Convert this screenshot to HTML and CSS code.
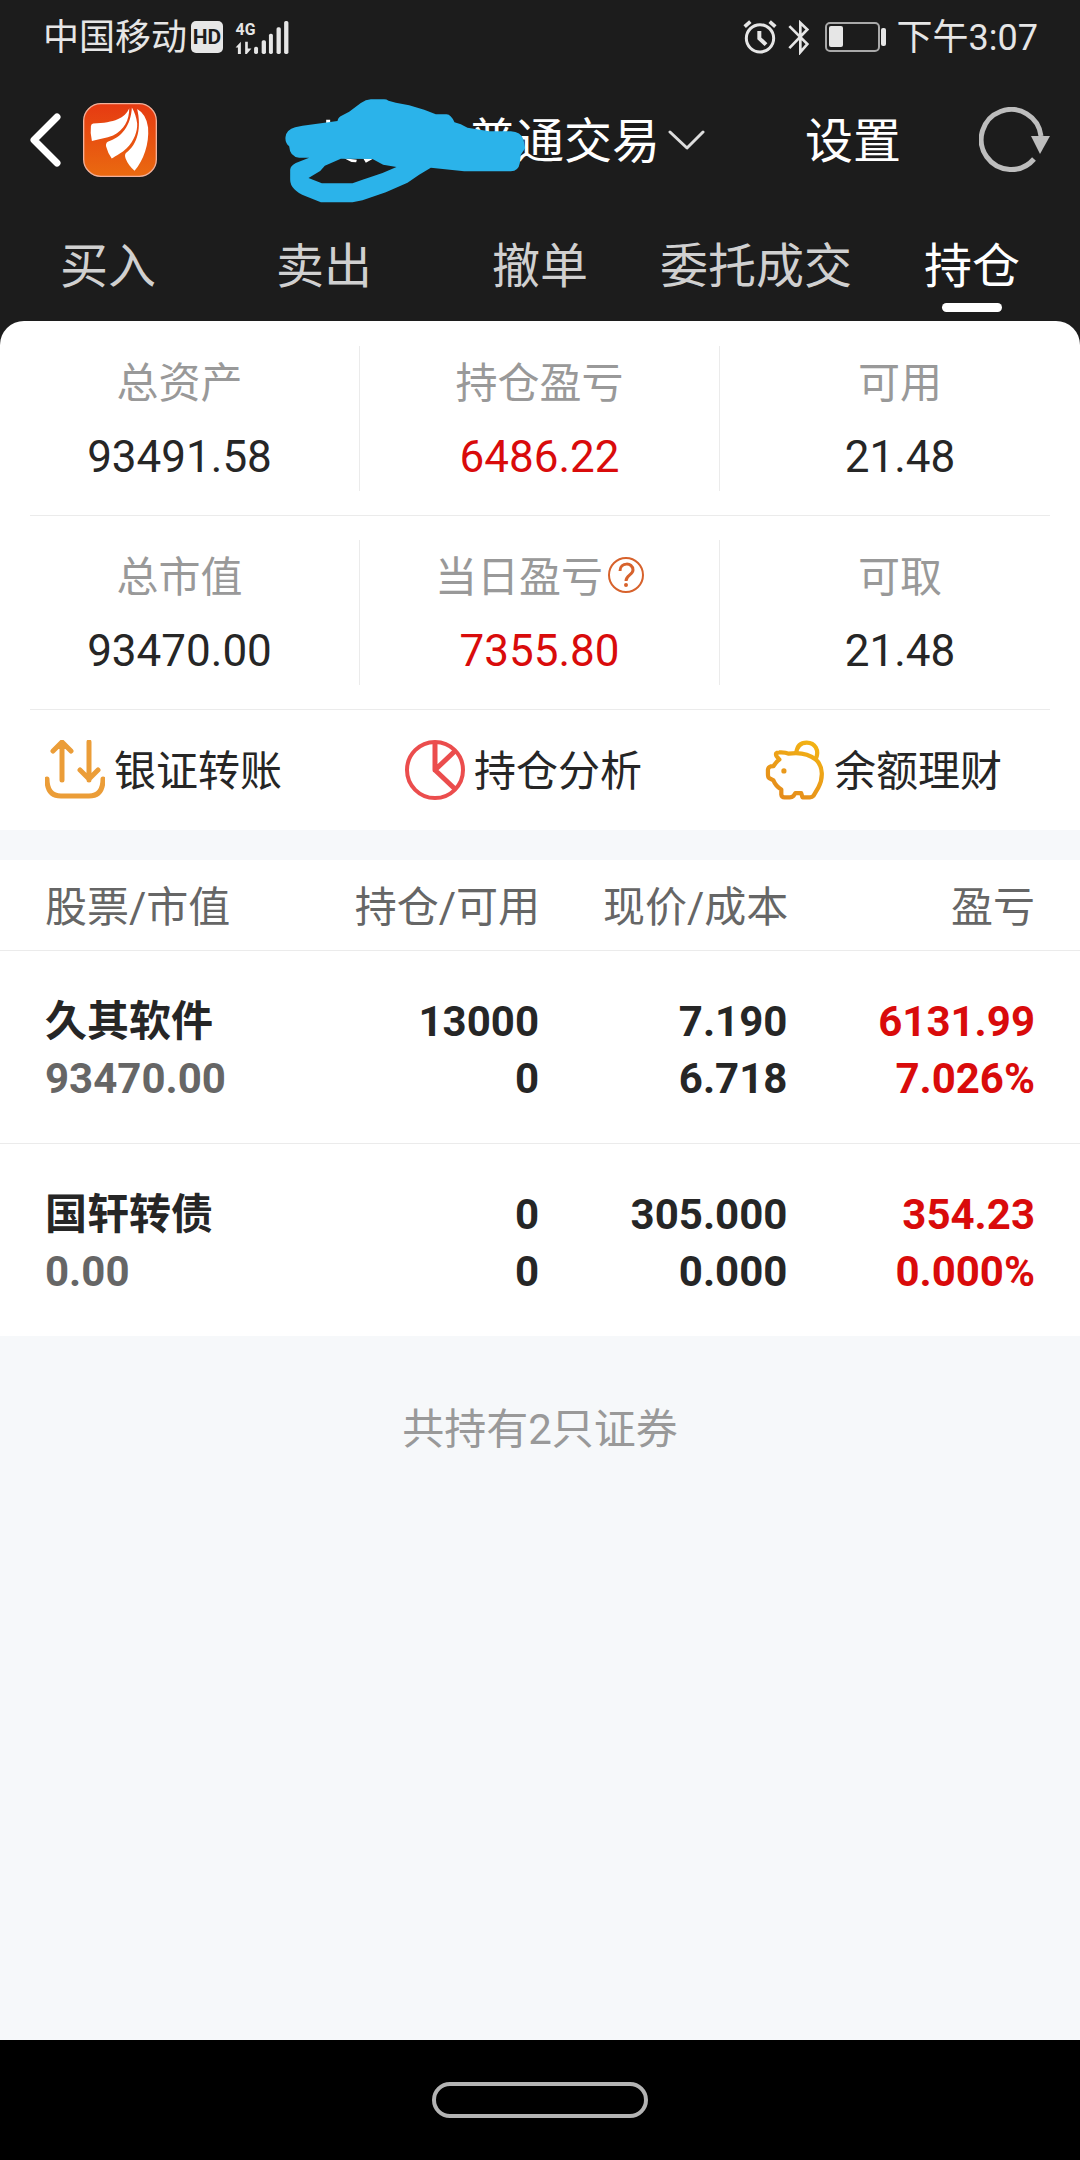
FILE: index.html
```html
<!DOCTYPE html>
<html lang="zh-CN">
<head>
    <meta charset="UTF-8">
    <meta name="viewport" content="width=device-width, initial-scale=1.0">
    <title>持仓 - 普通交易</title>
    <link rel="stylesheet" href="styles.css">
</head>
<body>
    <div class="screen">
        <div class="top">
            <div class="status-bar">
                <span class="carrier">中国移动</span>
                <span class="hd-badge">HD</span>
                <svg class="signal" viewBox="700 54 168 106">
                    <text x="704" y="99">4G</text>
                    <path d="M720 157h-9v-20h-7l16-17zM733 120h8v20h11l-14 17h-5z"/>
                    <rect x="760" y="135" width="12" height="22" rx="5"/>
                    <rect x="783" y="115" width="13" height="42" rx="5"/>
                    <rect x="805" y="96" width="12" height="61" rx="5"/>
                    <rect x="828" y="76" width="13" height="81" rx="5"/>
                    <rect x="851" y="57" width="13" height="100" rx="5"/>
                </svg>
                <svg class="alarm" viewBox="0 0 102 102" fill="none" stroke="currentColor" stroke-width="9">
                    <circle cx="51" cy="55" r="41"/>
                    <path d="M49 33v22l20 19" stroke-width="12"/>
                    <path d="M5 20L22 5M97 20L80 5" stroke-width="11"/>
                </svg>
                <svg class="bluetooth" viewBox="0 0 66 104" fill="none" stroke="currentColor" stroke-width="8">
                    <path d="M4 18l54 54-21 24V8l21 20L4 84"/>
                </svg>
                <svg class="battery" viewBox="0 0 62 30">
                    <rect x="1" y="1" width="53" height="28" rx="4" fill="none" stroke="#a9a9a9" stroke-width="2"/>
                    <rect x="4" y="4" width="14" height="21" rx="2" fill="currentColor"/>
                    <rect x="56" y="6" width="5" height="18" rx="2" fill="currentColor"/>
                </svg>
                <span class="clock">下午3:07</span>
            </div>

            <header class="title-bar">
                <button class="icon-btn" type="button" aria-label="返回">
                    <svg class="back" viewBox="0 0 31 54" fill="none" stroke="#fff" stroke-width="7" stroke-linecap="round" stroke-linejoin="round"><path d="M27 4L4 27l23 23"/></svg>
                </button>
                <svg class="logo" viewBox="249 306 224 224">
                    <defs>
                        <linearGradient id="logoBg" x1="0" y1="0" x2="0" y2="1">
                            <stop offset="0" stop-color="#e63a12"/>
                            <stop offset="1" stop-color="#ea6a10"/>
                        </linearGradient>
                    </defs>
                    <rect x="251" y="308" width="220" height="220" rx="52" fill="url(#logoBg)" stroke="#f2b09a" stroke-width="4"/>
                    <g fill="#fff">
                        <path d="M389 322C376 352 345 366 280 368Q274 369 273 376Q270 398 276 421C296 414 320 413 340 404C374 388 389 358 389 322z"/>
                        <path d="M397 320C394 375 365 412 324 423Q317 427 319 438Q324 458 336 474C350 464 366 458 382 442C404 420 414 392 413 368Q409 340 397 320z"/>
                        <path d="M413 324C426 380 416 430 379 457Q374 462 378 474Q386 495 405 511C432 480 450 430 446 380Q441 340 413 324z"/>
                    </g>
                </svg>
                <button class="account" type="button">
                    <span>普通交易</span>
                    <svg class="chevron" viewBox="0 0 37 21" fill="none" stroke="#ddd" stroke-width="3" stroke-linecap="round" stroke-linejoin="round"><path d="M2 2l17 16L35 2"/></svg>
                    <svg class="scribble" viewBox="78 58 722 312">
                        <path fill="#fff" d="M201 120h12v14h-12zM255 236l38 4-2 8-14-1zM312 236l28 2-20 11z"/>
                        <path fill="#2bb3ea" fill-rule="evenodd" d="M79 172Q82 150 108 143L130 138 235 124Q237 112 250 107L270 96 305 70Q320 59 335 59H375Q382 59 388 63L410 69 450 77 495 90 530 104H562Q576 105 586 128L605 134 625 144 690 155H755Q785 156 793 180L798 206 785 225 782 250Q778 274 755 275H615L515 264 480 285 445 309 380 338 310 362 280 368H185L140 350Q93 330 93 300V270Q94 258 110 250L150 234H120Q92 232 90 200Q77 188 79 172zM148 295L188 311H280L310 300 370 280 412 262 372 255 340 238 245 237 197 258 183 274z"/>
                    </svg>
                </button>
                <button class="settings" type="button">设置</button>
                <button class="icon-btn" type="button" aria-label="刷新">
                    <svg class="refresh" viewBox="0 0 72 66"><path d="M55 52A30 30 0 1 1 62 29" fill="none" stroke="#bdbdbd" stroke-width="5"/><path d="M52 29h19L61 47z" fill="#bdbdbd"/></svg>
                </button>
            </header>

            <nav class="tabs">
                <a href="#">买入</a>
                <a href="#">卖出</a>
                <a href="#">撤单</a>
                <a href="#">委托成交</a>
                <a href="#" class="active">持仓</a>
            </nav>
        </div>

        <main>
            <section class="summary">
                <div class="summary-row">
                    <div class="cell"><span class="label">总资产</span><span class="value">93491.58</span></div>
                    <div class="cell"><span class="label">持仓盈亏</span><span class="value red">6486.22</span></div>
                    <div class="cell"><span class="label">可用</span><span class="value">21.48</span></div>
                </div>
                <hr>
                <div class="summary-row">
                    <div class="cell"><span class="label">总市值</span><span class="value">93470.00</span></div>
                    <div class="cell"><span class="label">当日盈亏<button class="help" type="button" aria-label="当日盈亏说明"><svg viewBox="0 0 36 36" fill="none" stroke="#d7622c" stroke-width="2"><circle cx="18" cy="18" r="17"/><path d="M12 14C12 5 25 5 25 13C25 18 18 18 18 24" stroke-width="3"/><circle cx="18" cy="28" r="1" stroke-width="2"/></svg></button></span><span class="value red">7355.80</span></div>
                    <div class="cell"><span class="label">可取</span><span class="value">21.48</span></div>
                </div>
                <hr>
                <div class="actions">
                    <a href="#">
                        <svg viewBox="0 0 60 60" fill="none" stroke="#eb9d38" stroke-width="5" stroke-linecap="round" stroke-linejoin="round"><path d="M2 39Q2 56 16 56H44Q58 56 58 39M17 40V3M8 11l9-9 9 9M44 2v38M35 30l9 9 9-9"/></svg>
                        <span>银证转账</span>
                    </a>
                    <a href="#">
                        <svg viewBox="0 0 60 60" fill="none" stroke="#eb4d4d" stroke-width="4"><circle cx="30" cy="30" r="28"/><path d="M30 2V30L50 11M30 30L50 49" stroke-width="5" stroke-linejoin="round"/></svg>
                        <span>持仓分析</span>
                    </a>
                    <a href="#">
                        <svg viewBox="613 118 182 184" fill="none" stroke="url(#pigLine)" stroke-width="13" stroke-linejoin="round">
                            <defs>
                                <linearGradient id="pigLine" gradientUnits="userSpaceOnUse" x1="760" y1="120" x2="660" y2="300">
                                    <stop offset="0" stop-color="#f3b414"/>
                                    <stop offset="1" stop-color="#e48a1c"/>
                                </linearGradient>
                            </defs>
                            <path d="M656 178L647 167Q642 156 655 156Q675 155 684 160Q735 152 768 178C792 200 790 238 775 265L760 290Q757 294 750 294H727L723 281H705L699 290Q695 294 688 294H672Q663 294 662 285V270Q644 258 638 242L625 235Q621 232 621 222V209Q622 201 629 199L638 198Q646 185 656 178z"/>
                            <path d="M708 158C710 136 722 126 740 126C766 126 779 150 768 176"/>
                            <circle cx="670" cy="213" r="8" fill="#e9991b" stroke="none"/>
                        </svg>
                        <span>余额理财</span>
                    </a>
                </div>
            </section>

            <table class="holdings">
                <thead>
                    <tr><th>股票/市值</th><th>持仓/可用</th><th>现价/成本</th><th>盈亏</th></tr>
                </thead>
                <tbody>
                    <tr>
                        <td>久其软件<br><span class="muted">93470.00</span></td>
                        <td>13000<br>0</td>
                        <td>7.190<br>6.718</td>
                        <td class="red">6131.99<br>7.026%</td>
                    </tr>
                    <tr>
                        <td>国轩转债<br><span class="muted">0.00</span></td>
                        <td>0<br>0</td>
                        <td>305.000<br>0.000</td>
                        <td class="red">354.23<br>0.000%</td>
                    </tr>
                </tbody>
            </table>
            <p class="total">共持有2只证券</p>
        </main>

        <div class="system-nav"><button class="home-pill" type="button" aria-label="主屏幕"></button></div>
    </div>
</body>
</html>
```
FILE: styles.css
```css
* { box-sizing: border-box; }
body { margin: 0; font-family: Roboto, "Noto Sans CJK SC", sans-serif; font-size: 42px; line-height: 56px; color: #262626; background-color: #f6f8fa; }
button { padding: 0; border: none; background: none; font: inherit; color: inherit; cursor: pointer; }
a { color: inherit; text-decoration: none; }
svg { display: block; flex-shrink: 0; }
.screen { min-height: 100vh; display: flex; flex-direction: column; }
.top { background-color: #1c1c1c; color: #fff; }

.status-bar { display: flex; align-items: center; height: 74px; padding: 0 42px 0 43px; font-size: 36px; color: #e6e6e6; }
.carrier, .clock { padding-top: 2px; }
.hd-badge { width: 32px; height: 32px; margin: 0 11px 0 4px; border-radius: 5px; background-color: #e6e6e6; color: #1c1c1c; font-size: 21px; font-weight: bold; line-height: 32px; text-align: center; }
.signal { width: 56px; height: 35px; fill: currentColor; }
.signal text { font-size: 48px; font-weight: bold; }
.alarm { width: 34px; height: 34px; margin-left: auto; }
.bluetooth { width: 22px; height: 35px; margin: 0 15px 0 11px; }
.battery { width: 62px; height: 30px; margin-right: 10px; }

.title-bar { display: flex; align-items: center; height: 132px; padding: 0 29px 0 30px; font-size: 48px; }
.back { width: 31px; height: 54px; }
.logo { width: 74px; height: 74px; margin-left: 22px; }
.account { position: relative; flex: 1; display: flex; align-items: center; justify-content: flex-end; gap: 8px; margin-right: 100px; }
.account span, .settings { padding-top: 4px; }
.chevron { width: 37px; height: 21px; }
.scribble { position: absolute; right: 179px; top: -11px; width: 241px; height: 104px; }
.settings { margin-right: 78px; }
.refresh { width: 72px; height: 66px; }

.tabs { display: grid; grid-template-columns: repeat(5, 1fr); font-size: 48px; color: #d0d0d0; }
.tabs a { display: flex; flex-direction: column; align-items: center; gap: 8px; padding: 33px 0 9px; white-space: nowrap; }
.tabs a::after { content: ""; width: 60px; height: 9px; border-radius: 5px; }
.tabs .active { color: #fff; }
.tabs .active::after { background-color: #fff; }

main { flex: 1; background: linear-gradient(#1c1c1c 30px, #f6f8fa 30px); }
.summary { padding-top: 1px; border-radius: 24px 24px 0 0; background-color: #fff; }
.summary-row { display: grid; grid-template-columns: repeat(3, 1fr); padding: 24px 0; }
.summary hr { height: 1px; margin: 0 30px; border: none; background-color: #ebebeb; }
.cell { display: flex; flex-direction: column; align-items: center; gap: 17px; padding: 10px 0 6px; border-right: 1px solid #ebebeb; }
.cell:last-child { border-right: none; }
.label { display: flex; align-items: center; gap: 5px; color: #999; }
.value { font-size: 44px; }
.help { padding-bottom: 6px; }
.help svg { width: 36px; height: 36px; }
.red { color: #d90b0b; }

.actions { display: grid; grid-template-columns: repeat(3, 1fr); }
.actions a { display: flex; align-items: center; gap: 9px; height: 120px; padding-left: 45px; white-space: nowrap; }
.actions span { padding-top: 4px; }
.actions svg { width: 60px; height: 60px; }

.holdings { width: 100%; margin-top: 30px; border-collapse: separate; border-spacing: 0; table-layout: fixed; background-color: #fff; text-align: right; }
.holdings th { padding: 20px 0 14px; border-bottom: 1px solid #ebebeb; font-weight: normal; color: #666; white-space: nowrap; }
.holdings th:nth-child(1) { width: 24%; }
.holdings th:nth-child(2) { width: 26%; }
.holdings th:nth-child(3) { width: 23%; }
.holdings td { padding: 42px 1px 36px 0; border-bottom: 1px solid #ebebeb; font-weight: bold; line-height: 57px; }
.holdings tr > :first-child { padding-left: 45px; text-align: left; }
.holdings tr > :last-child { padding-right: 45px; }
.holdings tr:last-child td { border-bottom: none; }
.muted { color: #666; }
.total { margin: 0; padding: 66px 0; text-align: center; color: #999; }

.system-nav { display: flex; align-items: center; justify-content: center; height: 120px; background-color: #000; }
.home-pill { width: 216px; height: 36px; border: 4px solid #b3b3b3; border-radius: 18px; }
```
